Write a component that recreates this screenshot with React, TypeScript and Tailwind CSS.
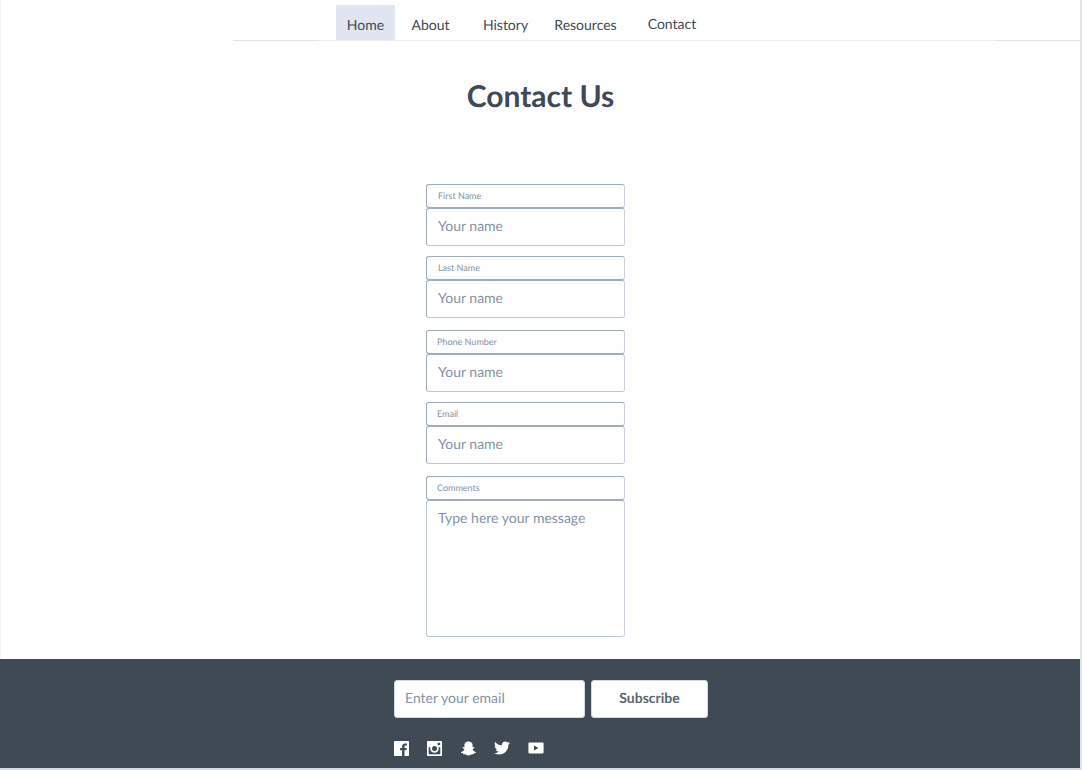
import React from "react";
import { FaSnapchatGhost, FaTwitter } from "react-icons/fa";

const navItems = [
  { label: "Home", style: "w-[59px] bg-[#e1e5f0] pt-1" },
  { label: "About", style: "w-[71px] pt-1" },
  { label: "History", style: "w-[79px] pt-1" },
  { label: "Resources", style: "w-[81px] pt-1" },
  { label: "Contact", style: "w-[92px] pt-0.5" },
];

const fields = [
  { id: "first-name", label: "First Name", type: "text", style: "mb-2.5", pad: "pl-[11px]" },
  { id: "last-name", label: "Last Name", type: "text", style: "mb-3", pad: "pl-[11px]" },
  { id: "phone", label: "Phone Number", type: "tel", style: "mb-2.5", pad: "pl-[10px]" },
  { id: "email", label: "Email", type: "email", style: "mb-3", pad: "pl-[10px]" },
];

const labelBox =
  "flex h-6 items-center rounded-[3px] border border-[#9fabbd] border-r-[#cbd3de] text-[9px] text-[#8492a6]";

function FacebookIcon() {
  return (
    <svg viewBox="0 0 15 15" className="size-[15px] shrink-0" fill="currentColor" aria-hidden="true">
      <path d="M.8 0h13.4c.5 0 .8.3.8.8v13.4c0 .5-.3.8-.8.8h-3.7V9.3h2l.3-2.3h-2.3V5.6c0-.7.2-1.1 1.1-1.1h1.3v-2c-.2 0-1-.1-1.8-.1-1.8 0-3 1.1-3 3V7h-2v2.3h2V15H.8c-.5 0-.8-.3-.8-.8V.8C0 .3.3 0 .8 0Z" />
    </svg>
  );
}

function InstagramIcon() {
  return (
    <svg viewBox="0 0 15 15" className="size-[15px] shrink-0" aria-hidden="true">
      <rect width="15" height="15" rx="0.8" fill="currentColor" />
      <path d="M1.7 6.2h11.6v7.1H1.7Z" fill="#3f4a54" />
      <path d="M10.6 1.8h2.6v2.4h-2.6Z" fill="#3f4a54" />
      <circle cx="7.5" cy="7.5" r="4.3" fill="currentColor" />
      <circle cx="7.5" cy="7.5" r="2.5" fill="#3f4a54" />
    </svg>
  );
}

function YoutubeIcon() {
  return (
    <svg viewBox="0 0 16 12" className="h-3 w-4 shrink-0" fill="currentColor" aria-hidden="true">
      <path
        fillRule="evenodd"
        d="M1.2.6h13.6c.5 0 .8.3.8.8v9.2c0 .5-.3.8-.8.8H1.2c-.5 0-.8-.3-.8-.8V1.4c0-.5.3-.8.8-.8ZM6 3.6v4.8L10.4 6 6 3.6Z"
      />
    </svg>
  );
}

const socials = [
  { name: "Facebook", icon: <FacebookIcon /> },
  { name: "Instagram", icon: <InstagramIcon /> },
  { name: "Snapchat", icon: <FaSnapchatGhost className="size-[15px] shrink-0" aria-hidden="true" /> },
  { name: "Twitter", icon: <FaTwitter className="size-4 shrink-0" aria-hidden="true" /> },
  { name: "YouTube", icon: <YoutubeIcon /> },
];

export default function App() {
  return (
    <div className="border-r-2 border-b-2 border-r-[#e1e5ec] border-b-[#d5dae5] bg-[#fefefe] font-['Lato',sans-serif] [text-rendering:geometricPrecision]">
      <div className="border-l border-[#f3f3f3]">
        <header className="pt-[5px] pl-[232px]">
          <nav className="flex pl-[103px]" aria-label="Main">
            {navItems.map((item) => (
              <a
                key={item.label}
                href="#"
                className={`flex h-[35px] items-center justify-center text-sm text-[#3f4a54] ${item.style}`}
              >
                {item.label}
              </a>
            ))}
          </nav>
          <div className="flex h-px" aria-hidden="true">
            <span className="w-[85px] bg-[#dfe3f1]" />
            <span className="flex-1 bg-[#ebedf4]" />
            <span className="w-[84px] bg-[#dfe3f1]" />
          </div>
        </header>

        <main className="pt-[37px] pb-[22px]">
          <h1 className="text-center text-3xl font-bold text-[#3f4a54]">Contact Us</h1>
          <form className="flex flex-col items-center pt-[70px] pr-[30px]">
            {fields.map((field) => (
              <div key={field.id} className={`w-[199px] ${field.style}`}>
                <label htmlFor={field.id} className={`${labelBox} ${field.pad}`}>
                  {field.label}
                </label>
                <input
                  id={field.id}
                  type={field.type}
                  placeholder="Your name"
                  className="block h-[38px] w-full rounded-[3px] border border-[#9fabbd] border-r-[#cbd3de] border-b-[#bcc6d4] bg-white px-[11px] pb-1 text-sm text-[#3f4a54] outline-none [text-rendering:inherit] placeholder:text-[#8492a6]"
                />
              </div>
            ))}
            <div className="w-[199px]">
              <label htmlFor="comments" className={`${labelBox} pl-[10px]`}>
                Comments
              </label>
              <textarea
                id="comments"
                placeholder="Type here your message"
                className="block h-[137px] w-full resize-none rounded-[3px] border border-[#bcc6d4] border-t-[#9fabbd] border-r-[#cbd3de] bg-white px-[11px] py-[7px] text-sm text-[#3f4a54] outline-none [text-rendering:inherit] placeholder:text-[#8492a6]"
              />
            </div>
          </form>
        </main>
      </div>

      <footer className="flex justify-center bg-[#3f4a54] pt-[21px] pb-3 pl-[22px]">
        <div className="w-[314px]">
          <form className="flex gap-1.5">
            <input
              type="email"
              aria-label="Email address"
              placeholder="Enter your email"
              className="h-[38px] min-w-0 flex-1 rounded-[3px] border border-[#d3dae3] bg-white px-[10px] pb-1 text-sm text-[#3f4a54] outline-none [text-rendering:inherit] placeholder:text-[#8492a6]"
            />
            <button
              type="button"
              className="h-[38px] w-[117px] rounded-[3px] border border-[#d3dae3] bg-white pb-0.5 text-sm font-bold text-[#5a6470] [text-rendering:inherit]"
            >
              Subscribe
            </button>
          </form>
          <div className="flex w-[149px] justify-between pt-[22px] text-white">
            {socials.map((social) => (
              <a
                key={social.name}
                href="#"
                aria-label={social.name}
                className="flex h-4 w-3.5 items-center justify-center"
              >
                {social.icon}
              </a>
            ))}
          </div>
        </div>
      </footer>
    </div>
  );
}
